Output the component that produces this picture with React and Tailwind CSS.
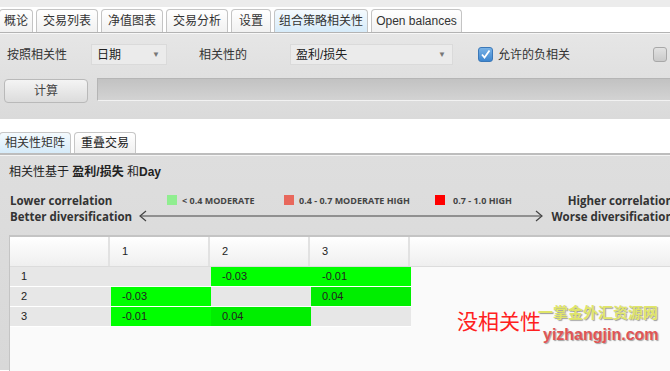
import React from 'react';

const tabs = [
  { label: '概论', w: 'w-[34px] -ml-[1px]' },
  { label: '交易列表', w: 'w-[62px]' },
  { label: '净值图表', w: 'w-[62px]' },
  { label: '交易分析', w: 'w-[62px]' },
  { label: '设置', w: 'w-[40px]' },
  { label: '组合策略相关性', w: 'w-[94px]', active: true },
  { label: 'Open balances', w: 'w-[91px]' },
];

const rows = [
  { name: '1', cells: [null, { v: '-0.03', c: 'bg-[#00ff00]' }, { v: '-0.01', c: 'bg-[#00ff00]' }] },
  { name: '2', cells: [{ v: '-0.03', c: 'bg-[#00ff00]' }, null, { v: '0.04', c: 'bg-[#00ee00]' }] },
  { name: '3', cells: [{ v: '-0.01', c: 'bg-[#00ff00]' }, { v: '0.04', c: 'bg-[#00ee00]' }, null] },
];

const Tab = ({ label, w, active }) => (
  <div
    className={`${w} shrink-0 h-[23px] flex items-center justify-center rounded-t-[4px] border border-b-0 border-[#c4c4c4] ${
      active ? 'bg-gradient-to-b from-[#f4fafe] to-[#d6ebf9]' : 'bg-gradient-to-b from-white to-[#f1f1f1]'
    }`}
  >
    {label}
  </div>
);

const Select = ({ label, w }) => (
  <div className={`${w} shrink-0 h-[21px] flex items-center justify-between pl-[5px] pr-[6px] bg-[#ebebeb] border border-[#dadada]`}>
    <span className="text-[#222]">{label}</span>
    <span className="text-[8px] text-[#777]">▼</span>
  </div>
);

export default function App() {
  return (
    <div className="relative w-[670px] h-[371px] overflow-hidden bg-white text-[12px] leading-none text-[#333] font-['Liberation_Sans','Noto_Sans_CJK_SC',sans-serif]">
      <div className="h-[7px] bg-[#ececec]" />

      {/* main tabs */}
      <div className="h-[26px] pt-[2px] flex items-end gap-[3px] border-b border-[#b3b3b3]">
        {tabs.map((t) => (
          <Tab key={t.label} {...t} />
        ))}
      </div>

      {/* controls */}
      <div className="h-[86px] border-t border-[#f7f7f7] bg-gradient-to-b from-[#e6e6e6] to-[#dadada] pt-[10px]">
        <div className="flex items-center h-[21px] whitespace-nowrap">
          <span className="ml-[7px] w-[84px] shrink-0">按照相关性</span>
          <Select label="日期" w="w-[76px]" />
          <span className="ml-[32px] w-[91px] shrink-0">相关性的</span>
          <Select label="盈利/损失" w="w-[163px]" />
          <div className="ml-[25px] shrink-0 w-[15px] h-[15px] rounded-[3px] border border-[#3b78b8] bg-gradient-to-b from-[#79b2e6] to-[#3d86cf] flex items-center justify-center">
            <svg width="11" height="11" viewBox="0 0 11 11">
              <path d="M2 5.5 L4.5 8.5 L9.5 1.5" fill="none" stroke="white" strokeWidth="1.8" />
            </svg>
          </div>
          <span className="ml-[5px] shrink-0">允许的负相关</span>
          <div className="ml-[83px] shrink-0 w-[14px] h-[15px] rounded-[3px] border border-[#a8a8a8] bg-gradient-to-b from-[#e2e2e2] to-[#cacaca]" />
        </div>
        <div className="flex items-start mt-[13px]">
          <div className="ml-[4px] shrink-0 w-[84px] h-[24px] mt-[1px] rounded-[4px] border border-[#b9b9b9] bg-gradient-to-b from-[#f4f4f4] to-[#dcdcdc] flex items-center justify-center text-[#444]">
            计算
          </div>
          <div className="ml-[9px] flex-1 h-[23px] border-t border-l border-[#b5b5b5] border-b border-b-[#f2f2f2] bg-gradient-to-b from-[#c2c2c2] to-[#d3d3d3]" />
        </div>
      </div>

      <div className="h-[14px] bg-white" />

      {/* sub tabs */}
      <div className="h-[22px] flex items-end gap-[3px] border-b-2 border-[#bdbdbd]">
        <div className="w-[72px] h-[21px] flex items-center justify-center rounded-t-[4px] border border-b-0 border-[#c6c6c6] -ml-[1px] bg-gradient-to-b from-[#f4fafe] to-[#d6ebf9]">
          相关性矩阵
        </div>
        <div className="w-[62px] h-[21px] flex items-center justify-center rounded-t-[4px] border border-b-0 border-[#c6c6c6] bg-gradient-to-b from-white to-[#f0f0f0] text-[#222]">
          重叠交易
        </div>
      </div>

      {/* correlation panel */}
      <div className="h-[215px] border-t border-[#f4f4f4] bg-gradient-to-b from-[#dedede] to-[#d8d8d8]">
        <div className="pt-[10px] pl-[9px] h-[34px] text-[#222]">
          相关性基于 <b>盈利/损失</b> 和<b>Day</b>
        </div>

        <div className="flex items-center h-[38px] whitespace-nowrap font-['Open_Sans','Noto_Sans_CJK_SC',sans-serif]">
          <div className="ml-[10px] w-[128px] shrink-0 text-[11.5px] font-bold leading-[16px] text-[#333]">
            <div>Lower correlation</div>
            <div>Better diversification</div>
          </div>
          <div className="w-[406px] shrink-0 h-[36px] flex flex-col">
            <div className="h-[18px] flex items-center text-[9px] font-bold text-[#444]">
              <span className="ml-[29px] shrink-0 w-[10px] h-[10px] bg-[#90ee90]" />
              <span className="ml-[5px] w-[102px] shrink-0">&lt; 0.4 MODERATE</span>
              <span className="shrink-0 w-[10px] h-[10px] bg-[#e8685c]" />
              <span className="ml-[5px] w-[136px] shrink-0">0.4 - 0.7 MODERATE HIGH</span>
              <span className="shrink-0 w-[10px] h-[10px] bg-[#ff0000]" />
              <span className="ml-[8px] shrink-0">0.7 - 1.0 HIGH</span>
            </div>
            <svg width="406" height="14" viewBox="0 0 406 14" className="mt-[1px]">
              <path d="M2 6 H404" stroke="#444" strokeWidth="1" />
              <path d="M8 1 L2 6 L8 11" fill="none" stroke="#444" strokeWidth="1.2" />
              <path d="M398 1 L404 6 L398 11" fill="none" stroke="#444" strokeWidth="1.2" />
            </svg>
          </div>
          <div className="ml-[1px] w-[128px] shrink-0 text-right text-[11.5px] font-bold leading-[16px] text-[#333]">
            <div>Higher correlation</div>
            <div>Worse diversification</div>
          </div>
        </div>

        {/* matrix */}
        <div className="mt-[7px] ml-[9px] h-[140px] border-t-2 border-l border-[#c4c4c4] bg-[#fafafa] text-[11px] text-[#222]">
          <div className="flex h-[30px] border-b border-[#dcdcdc] bg-gradient-to-b from-white to-[#efefef]">
            <div className="w-[100px] border-r-2 border-[#e2e2e2]" />
            {['1', '2', '3'].map((h) => (
              <div key={h} className="w-[100px] border-r-2 border-[#e2e2e2] pl-[12px] flex items-center">
                {h}
              </div>
            ))}
            <div className="flex-1" />
          </div>
          {rows.map((r) => (
            <div key={r.name} className="flex h-[20px] border-b border-white w-[401px] bg-[#e7e7e7]">
              <div className="w-[101px] pl-[11px] flex items-center">{r.name}</div>
              {r.cells.map((c, i) => (
                <div key={i} className={`w-[100px] pl-[11px] flex items-center ${c ? c.c : ''}`}>
                  {c ? c.v : ''}
                </div>
              ))}
            </div>
          ))}
        </div>
      </div>

      {/* watermark */}
      <div className="absolute left-[457px] top-[310px] text-[21px] leading-none text-[#ff2020] font-['Noto_Sans_CJK_SC',sans-serif]">
        没相关性
      </div>
      <div className="absolute left-[538px] top-[304px] text-[15px] leading-none font-bold text-[#e0e66a] font-['Noto_Sans_CJK_SC',sans-serif] [text-shadow:1px_1px_1px_#9a9a9a]">
        一掌金外汇资源网
      </div>
      <div className="absolute left-[543px] top-[327px] text-[16px] leading-none font-bold text-[#e05555] font-['Liberation_Sans',sans-serif] [text-shadow:1px_1px_1px_#a0a0a0]">
        yizhangjin.com
      </div>
    </div>
  );
}
